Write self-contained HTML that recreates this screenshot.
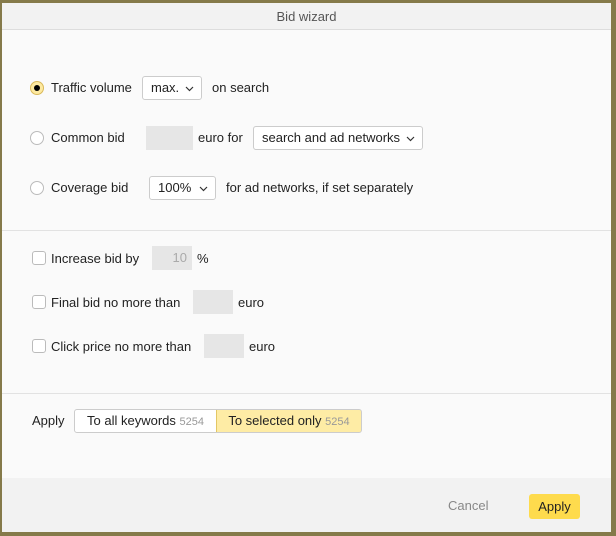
<!DOCTYPE html><html><head><style>
*{box-sizing:border-box;margin:0;padding:0}
body{width:616px;height:536px;background:#857a4a;font-family:"Liberation Sans",sans-serif;font-size:13px;color:#222;position:relative;overflow:hidden}
.d{position:absolute;left:2px;top:3px;width:609px;height:529px;background:#fafafa}
.h{height:27px;background:#f2f2f2;border-bottom:1px solid #ddd;text-align:center;line-height:27px;color:#555;font-size:13px}
.a{position:absolute;white-space:nowrap}
.r{position:absolute;width:14px;height:14px;border-radius:50%;border:1px solid #bbb;background:#fff}
.r.on{background:#fde9a0;border-color:#d9b95a}
.r.on:after{content:"";position:absolute;left:3px;top:3px;width:6px;height:6px;border-radius:50%;background:#000}
.c{position:absolute;width:14px;height:14px;border-radius:3px;border:1px solid #bbb;background:#fff}
.sel{position:absolute;height:24px;border:1px solid #ccc;border-radius:3px;background:#fff;line-height:22px;padding-left:8px}
.sel svg{position:absolute;right:7px;top:9px}
.in{position:absolute;height:24px;background:#e6e6e6}
.ln{position:absolute;left:0;width:609px;height:1px;background:#e2e2e2}
.ft{position:absolute;left:0;top:475px;width:609px;height:54px;background:#f2f2f2}
</style></head><body>
<div class="d">
<div class="h">Bid wizard</div>
<div class="r on" style="left:28px;top:78px"></div><div class="a" style="left:49px;top:77px">Traffic volume</div>
<div class="sel" style="left:140px;top:73px;width:60px">max.<svg width="9" height="6"><path d="M1 1l3.5 3.5L8 1" fill="none" stroke="#333" stroke-width="1.2"/></svg></div>
<div class="a" style="left:210px;top:77px">on search</div>
<div class="r" style="left:28px;top:128px"></div><div class="a" style="left:49px;top:127px">Common bid</div>
<div class="in" style="left:144px;top:123px;width:47px"></div>
<div class="a" style="left:196px;top:127px">euro for</div>
<div class="sel" style="left:251px;top:123px;width:170px">search and ad networks<svg width="9" height="6"><path d="M1 1l3.5 3.5L8 1" fill="none" stroke="#333" stroke-width="1.2"/></svg></div>
<div class="r" style="left:28px;top:178px"></div><div class="a" style="left:49px;top:177px">Coverage bid</div>
<div class="sel" style="left:147px;top:173px;width:67px">100%<svg width="9" height="6"><path d="M1 1l3.5 3.5L8 1" fill="none" stroke="#333" stroke-width="1.2"/></svg></div>
<div class="a" style="left:224px;top:177px">for ad networks, if set separately</div>
<div class="ln" style="top:227px"></div>
<div class="c" style="left:30px;top:248px"></div><div class="a" style="left:49px;top:248px">Increase bid by</div>
<div class="in" style="left:150px;top:243px;width:40px;color:#aaa;text-align:right;padding-right:5px;line-height:24px">10</div>
<div class="a" style="left:195px;top:248px">%</div>
<div class="c" style="left:30px;top:292px"></div><div class="a" style="left:49px;top:292px">Final bid no more than</div>
<div class="in" style="left:191px;top:287px;width:40px"></div><div class="a" style="left:236px;top:292px">euro</div>
<div class="c" style="left:30px;top:336px"></div><div class="a" style="left:49px;top:336px">Click price no more than</div>
<div class="in" style="left:202px;top:331px;width:40px"></div><div class="a" style="left:247px;top:336px">euro</div>
<div class="ln" style="top:390px"></div>
<div class="a" style="left:30px;top:410px">Apply</div>
<div class="a" style="left:72px;top:406px;width:288px;height:24px;border:1px solid #ccc;border-radius:3px;background:#fff;overflow:hidden">
<div class="a" style="left:0;top:0;width:141px;height:22px;line-height:22px;text-align:center">To all keywords <span style="color:#999;font-size:11px">5254</span></div>
<div class="a" style="left:141px;top:-1px;width:146px;height:24px;line-height:22px;text-align:center;background:#feeca5;border:1px solid #e3c765;border-radius:0 3px 3px 0">To selected only <span style="color:#999;font-size:11px">5254</span></div>
</div>
<div class="ft">
<div class="a" style="left:446px;top:20px;color:#888">Cancel</div>
<div class="a" style="left:527px;top:16px;width:51px;height:25px;background:#fedb4d;border-radius:3px;text-align:center;line-height:25px">Apply</div>
</div>
</div>
</body></html>
